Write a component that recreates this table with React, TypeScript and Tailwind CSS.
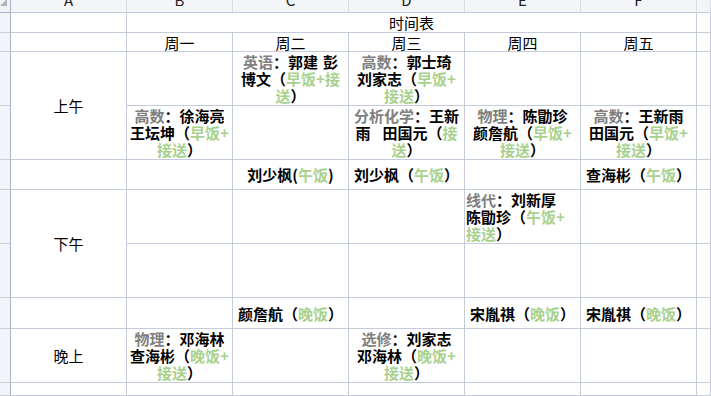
import React from "react";

const COL: Record<number, string> = {
  1: "col-start-1",
  2: "col-start-2",
  3: "col-start-3",
  4: "col-start-4",
  5: "col-start-5",
  6: "col-start-6",
  7: "col-start-7",
  8: "col-start-8",
};
const ROW: Record<number, string> = {
  1: "row-start-1",
  2: "row-start-2",
  3: "row-start-3",
  4: "row-start-4",
  5: "row-start-5",
  6: "row-start-6",
  7: "row-start-7",
  8: "row-start-8",
  9: "row-start-9",
  10: "row-start-10",
  11: "row-start-11",
};

type Kind = "b" | "l" | "g" | "s5" | "s12";
type Line = [string, Kind][];

function Seg({ t, k }: { t: string; k: Kind }) {
  if (k === "s5") return <span className="inline-block w-[5px]" />;
  if (k === "s12") return <span className="inline-block w-[12px]" />;
  const cls = k === "l" ? "text-[#808080]" : k === "g" ? "text-[#a9d18e]" : "text-black";
  return <span className={cls}>{t}</span>;
}

function Cell({
  c,
  r,
  span = "",
  left = false,
  lines,
  plain,
}: {
  c: number;
  r: number;
  span?: string;
  left?: boolean;
  lines?: Line[];
  plain?: string;
}) {
  return (
    <div
      className={`${COL[c]} ${ROW[r]} ${span} flex flex-col justify-center overflow-hidden border-r border-b border-[#c6cbdc] bg-white ${
        left ? "items-start pl-px" : "items-center"
      }`}
    >
      {plain && <div className="whitespace-nowrap text-[15px] leading-[17px] text-black">{plain}</div>}
      {lines &&
        lines.map((line, i) => (
          <div key={i} className="whitespace-nowrap text-[15px] font-bold leading-[17px]">
            {line.map(([t, k], j) => (
              <Seg key={j} t={t} k={k} />
            ))}
          </div>
        ))}
    </div>
  );
}

const meal = (name: string, m: string, half = false): Line[] => [
  [
    [name + (half ? "(" : "（"), "b"],
    [m, "g"],
    [half ? ")" : "）", "b"],
  ],
];

export default function App() {
  const letters = ["A", "B", "C", "D", "E", "F", ""];
  const filled = new Set<string>();
  const mark = (c: number, r: number) => filled.add(`${c}-${r}`);

  const content: React.ReactNode[] = [];

  // Row 2: title
  content.push(<Cell key="t" c={3} r={2} span="col-span-5" plain="时间表" />);
  for (let c = 3; c <= 7; c++) mark(c, 2);

  // Row 3: weekdays
  ["周一", "周二", "周三", "周四", "周五"].forEach((d, i) => {
    content.push(<Cell key={d} c={3 + i} r={3} plain={d} />);
    mark(3 + i, 3);
  });

  // Period labels
  content.push(<Cell key="am" c={2} r={4} span="row-span-2" plain="上午" />);
  mark(2, 4);
  mark(2, 5);
  content.push(<Cell key="pm" c={2} r={7} span="row-span-2" plain="下午" />);
  mark(2, 7);
  mark(2, 8);
  content.push(<Cell key="ev" c={2} r={10} plain="晚上" />);
  mark(2, 10);

  const put = (c: number, r: number, lines: Line[], left = false) => {
    content.push(<Cell key={`${c}-${r}`} c={c} r={r} lines={lines} left={left} />);
    mark(c, r);
  };

  put(4, 4, [
    [["英语", "l"], ["：郭建", "b"], ["", "s5"], ["彭", "b"]],
    [["博文（", "b"], ["早饭+接", "g"]],
    [["送", "g"], ["）", "b"]],
  ]);
  put(5, 4, [
    [["高数", "l"], ["：郭士琦", "b"]],
    [["刘家志（", "b"], ["早饭+", "g"]],
    [["接送", "g"], ["）", "b"]],
  ]);
  put(3, 5, [
    [["高数", "l"], ["：徐海亮", "b"]],
    [["王坛坤（", "b"], ["早饭+", "g"]],
    [["接送", "g"], ["）", "b"]],
  ]);
  put(5, 5, [
    [["分析化学", "l"], ["：王新", "b"]],
    [["雨", "b"], ["", "s12"], ["田国元（", "b"], ["接", "g"]],
    [["送", "g"], ["）", "b"]],
  ]);
  put(6, 5, [
    [["物理", "l"], ["：陈勖珍", "b"]],
    [["颜詹航（", "b"], ["早饭+", "g"]],
    [["接送", "g"], ["）", "b"]],
  ]);
  put(7, 5, [
    [["高数", "l"], ["：王新雨", "b"]],
    [["田国元（", "b"], ["早饭+", "g"]],
    [["接送", "g"], ["）", "b"]],
  ]);
  put(4, 6, meal("刘少枫", "午饭", true));
  put(5, 6, meal("刘少枫", "午饭"));
  put(7, 6, meal("查海彬", "午饭"));
  put(
    6,
    7,
    [
      [["线代", "l"], ["：刘新厚", "b"]],
      [["陈勖珍（", "b"], ["午饭+", "g"]],
      [["接送", "g"], ["）", "b"]],
    ],
    true
  );
  put(4, 9, meal("颜詹航", "晚饭"));
  put(6, 9, meal("宋胤祺", "晚饭"));
  put(7, 9, meal("宋胤祺", "晚饭"));
  put(3, 10, [
    [["物理", "l"], ["：邓海林", "b"]],
    [["查海彬（", "b"], ["晚饭+", "g"]],
    [["接送", "g"], ["）", "b"]],
  ]);
  put(5, 10, [
    [["选修", "l"], ["：刘家志", "b"]],
    [["邓海林（", "b"], ["晚饭+", "g"]],
    [["接送", "g"], ["）", "b"]],
  ]);

  // empty cells
  for (let r = 2; r <= 11; r++) {
    for (let c = 2; c <= 8; c++) {
      if (!filled.has(`${c}-${r}`)) {
        content.push(
          <div
            key={`e${c}-${r}`}
            className={`${COL[c]} ${ROW[r]} border-r border-b border-[#c6cbdc] bg-white`}
          />
        );
      }
    }
  }

  return (
    <div className="h-[396px] w-[711px] overflow-hidden bg-white font-['Noto_Sans_CJK_SC',sans-serif]">
      <div className="grid h-[396px] grid-cols-[11px_116px_106px_116px_116px_116px_116px_1fr] grid-rows-[13px_20px_19px_54px_54px_30px_54px_54px_31px_54px_1fr]">
        {/* corner */}
        <div className="col-start-1 row-start-1 overflow-hidden border-r border-b border-[#aab3cb] bg-[#f2f3f6]">
          <svg width="10" height="12" viewBox="0 0 10 12">
            <polygon points="0,6 7,6 7,-1" fill="#b4b4b4" />
          </svg>
        </div>
        {/* column headers */}
        {letters.map((l, i) => (
          <div
            key={`h${i}`}
            className={`${COL[i + 2]} row-start-1 flex justify-center overflow-hidden border-r border-b border-r-[#d9dce4] border-b-[#c3c8d8] bg-[#f4f5f8]`}
          >
            <span className="-mt-[9px] block text-[15px] leading-[17px] text-[#222]">{l}</span>
          </div>
        ))}
        {/* row headers */}
        {[2, 3, 4, 5, 6, 7, 8, 9, 10, 11].map((r) => (
          <div
            key={`r${r}`}
            className={`col-start-1 ${ROW[r]} border-r border-b border-r-[#aab3cb] border-b-[#c9cddb] bg-[#f3f4f7]`}
          />
        ))}
        {content}
      </div>
    </div>
  );
}
